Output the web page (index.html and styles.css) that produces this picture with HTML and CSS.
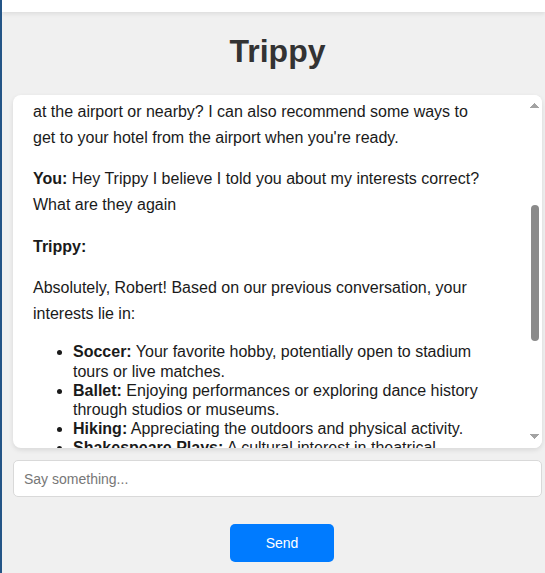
FILE: index.html
```html
<!DOCTYPE html>
<html lang="en">

<head>
    <meta charset="UTF-8" />
    <meta name="viewport" content="width=device-width, initial-scale=1.0" />
    <title>Trippy</title>
    <link rel="stylesheet" href="styles.css">
</head>

<body>
    <div class="topbar"></div>
    <div class="app">
        <h1 class="title">Trippy</h1>

        <div class="chat-wrap">
            <div class="chat" id="chat">
                <div class="msg bot"><strong>Trippy:</strong> Hi there! I'm Trippy, your personal travel assistant. Where are you headed next?</div>
                <div class="msg user"><strong>You:</strong> Hi Trippy, I'm Robert. I just landed in London for a week-long trip with friends!</div>
                <div class="msg bot">
                    <strong class="who">Trippy:</strong>
                    <p>Wonderful news! I hope your flight was smooth and relaxing.<br>Welcome, Robert! Would you like help storing your luggage safely<br>at the airport or nearby? I can also recommend some ways to<br>get to your hotel from the airport when you're ready.</p>
                </div>
                <div class="msg user" id="anchor"><strong>You:</strong> Hey Trippy I believe I told you about my interests correct? What are they again</div>
                <div class="msg bot">
                    <strong class="who">Trippy:</strong>
                    <p>Absolutely, Robert! Based on our previous conversation, your interests lie in:</p>
                    <ul>
                        <li><strong>Soccer:</strong> Your favorite hobby, potentially open to stadium tours or live matches.</li>
                        <li><strong>Ballet:</strong> Enjoying performances or exploring dance history through studios or museums.</li>
                        <li><strong>Hiking:</strong> Appreciating the outdoors and physical activity.</li>
                        <li><strong>Shakespeare Plays:</strong> A cultural interest in theatrical performances and classic literature.</li>
                        <li><strong>Food:</strong> Trying local cuisine and discovering small, cozy restaurants.</li>
                        <li><strong>Museums:</strong> Learning about history, art and science along the way.</li>
                    </ul>
                    <p>Would you like me to suggest some activities in London based on these interests? I could look up upcoming matches, ballet shows, hiking trails near the city, or plays at the Globe Theatre.</p>
                </div>
            </div>
            <div class="scrollbar" aria-hidden="true">
                <span class="scroll-arrow up"></span>
                <span class="scroll-thumb" id="thumb"></span>
                <span class="scroll-arrow down"></span>
            </div>
        </div>

        <form class="composer" onsubmit="return false;">
            <input class="composer-input" type="text" placeholder="Say something...">
            <button class="send-btn" type="submit">Send</button>
        </form>
    </div>

    <script>
        const chat = document.getElementById("chat");
        const thumb = document.getElementById("thumb");
        const anchor = document.getElementById("anchor");

        function moverThumb() {
            const trackTop = 17;
            const trackLen = chat.clientHeight - 34;
            const h = trackLen * chat.clientHeight / chat.scrollHeight;
            const max = chat.scrollHeight - chat.clientHeight;
            const top = trackTop + (trackLen - h) * (max ? chat.scrollTop / max : 0);
            thumb.style.top = top + "px";
            thumb.style.height = h + "px";
        }

        chat.scrollTop += anchor.getBoundingClientRect().top - 166;
        chat.addEventListener("scroll", moverThumb);
        moverThumb();
    </script>
</body>

</html>
```

FILE: styles.css
```css
* {
    box-sizing: border-box;
}

body {
    margin: 0;
    font-family: "Liberation Sans", Arial, sans-serif;
    background: #f0f0f0;
    border-left: 2px solid #245587;
    min-height: 100vh;
    color: #1a1a1a;
}

.topbar {
    height: 12px;
    background: #fff;
    box-shadow: 0 2px 4px rgba(0, 0, 0, 0.08);
}

.app {
    display: flex;
    flex-direction: column;
    padding: 0 3px 0 11px;
}

.title {
    margin: 21px 0 25px;
    text-align: center;
    font-size: 32px;
    color: #333;
}

.chat-wrap {
    position: relative;
    background: #fff;
    border-radius: 8px;
    box-shadow: 0 2px 5px rgba(0, 0, 0, 0.1);
    overflow: hidden;
}

.chat {
    height: 353px;
    overflow-y: auto;
    padding: 20px 35px 20px 20px;
    font-size: 16px;
    line-height: 1.6;
    scrollbar-width: none;
}

.chat::-webkit-scrollbar {
    display: none;
}

.scrollbar {
    position: absolute;
    top: 0;
    right: 0;
    bottom: 0;
    width: 15px;
    background: #fff;
}

.scroll-arrow {
    position: absolute;
    left: 3px;
    width: 9px;
    height: 5px;
}

.scroll-arrow.up {
    top: 8px;
    background: conic-gradient(from 135deg at 50% 0, #a3a3a3 90deg, transparent 0);
}

.scroll-arrow.down {
    bottom: 9px;
    background: conic-gradient(from -45deg at 50% 100%, #a3a3a3 90deg, transparent 0);
}

.scroll-thumb {
    position: absolute;
    left: 4px;
    width: 8px;
    border-radius: 4px;
    background: #8a8a8a;
}

.msg {
    margin: 16px 0;
}

.msg:first-child {
    margin-top: 0;
}

.msg .who {
    display: block;
}

.msg p {
    margin: 16px 0;
}

.msg ul {
    margin: 16px 0;
    line-height: 1.2;
}

.composer {
    display: flex;
    flex-direction: column;
    margin: 12px 0 0;
}

.composer-input {
    height: 37px;
    padding: 0 10px;
    border: 1px solid #d9d9d9;
    border-radius: 5px;
    background: #fff;
    font-family: inherit;
    font-size: 14px;
    color: #222;
}

.composer-input::placeholder {
    color: #777;
}

.send-btn {
    align-self: center;
    margin: 27px 0 0 9px;
    padding: 11px 36px;
    border: none;
    border-radius: 5px;
    background: #007bff;
    color: #fff;
    font-family: inherit;
    font-size: 14px;
    line-height: 16px;
    cursor: pointer;
}
```
